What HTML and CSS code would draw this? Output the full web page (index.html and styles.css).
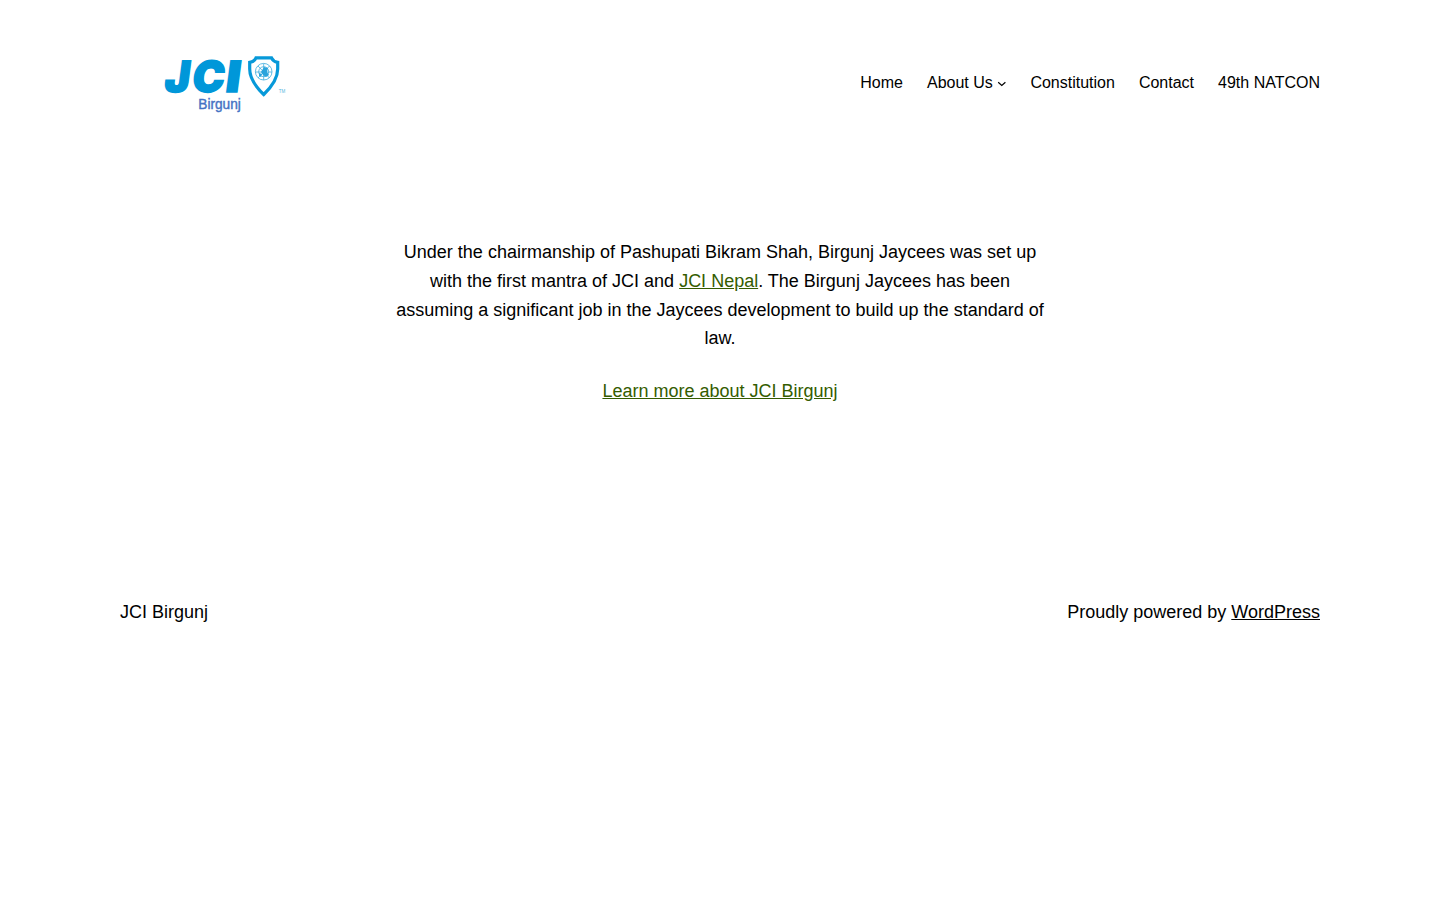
FILE: index.html
```html
<!DOCTYPE html>
<html lang="en">
<head>
<meta charset="utf-8">
<title>JCI Birgunj</title>
<link rel="stylesheet" href="styles.css">
</head>
<body>
<header class="site-header">
  <a class="logo" aria-label="JCI Birgunj">
    <svg width="210" height="80" viewBox="120 43 210 80">
      <g class="logo-letters" transform="translate(0 92.3) skewX(-7.5)">
        <text x="163.600" y="0" textLength="25" lengthAdjust="spacingAndGlyphs">J</text>
        <text x="191" y="0" textLength="32" lengthAdjust="spacingAndGlyphs">C</text>
        <text x="224.500" y="0" textLength="14.500" lengthAdjust="spacingAndGlyphs">I</text>
      </g>
      <path class="shield" d="M256 57.900H271.500Q273 61.500 277.700 62.300V69C277.700 79 271.500 87 263.700 94.500C256 87 249.700 79 249.700 69V62.300Q254.500 61.500 256 57.900Z"/>
      <g class="globe">
        <circle cx="263.700" cy="71.700" r="8.300"/>
        <circle cx="263.700" cy="71.700" r="5"/>
        <path d="M255.400 72H272M263.700 63.700V80M258 66L269.500 78M269.500 66L258 78"/>
        <path class="land" d="M264 67l4 1-1 4 2 3-3 2-3-2-2-3zM259 73l3 1-1 3-2-1z"/>
      </g>
      <text class="tm" x="278.800" y="92.800" textLength="6.500" lengthAdjust="spacingAndGlyphs">TM</text>
      <text class="logo-city" x="198.300" y="109" textLength="42.500" lengthAdjust="spacingAndGlyphs">Birgunj</text>
    </svg>
  </a>
  <nav class="menu">
    <a>Home</a>
    <a class="has-submenu">About Us<svg class="chevron" viewBox="0 0 12 12"><path d="M1.500 4L6 8l4.500-4"/></svg></a>
    <a>Constitution</a>
    <a>Contact</a>
    <a>49th NATCON</a>
  </nav>
</header>
<main class="content">
  <p>Under the chairmanship of Pashupati Bikram Shah, Birgunj Jaycees was set up with the first mantra of JCI and <a class="link">JCI Nepal</a>. The Birgunj Jaycees has been assuming a significant job in the Jaycees development to build up the standard of law.</p>
  <p><a class="link">Learn more about JCI Birgunj</a></p>
</main>
<footer class="site-footer">
  <p>JCI Birgunj</p>
  <p>Proudly powered by <a class="credit">WordPress</a></p>
</footer>
</body>
</html>
```
FILE: styles.css
```css
body {
  margin: 0;
  background: #fff;
  color: #000;
  font: 18px/1.6 "Liberation Sans", Arial, sans-serif;
}
p { margin: 0; }
.site-header, .site-footer {
  width: 1200px;
  margin: 0 auto;
  display: flex;
  justify-content: space-between;
  align-items: center;
}
.site-header { padding-top: 43px; }
.logo, .logo svg { display: block; }
.logo-letters {
  font-family: Inter, "Liberation Sans", sans-serif;
  font-size: 43px;
  font-weight: 900;
  fill: #0097d9;
  stroke: #0097d9;
  stroke-width: 1.5px;
}
.shield { fill: #fff; stroke: #0799d9; stroke-width: 3.2px; }
.globe { fill: none; stroke: #3cabdc; stroke-width: .8px; }
.globe .land { fill: #2ba4dc; stroke: none; }
.tm { font-size: 5px; fill: #55b5e0; }
.logo-city {
  font-size: 14px;
  fill: #4472c4;
  stroke: #4472c4;
  stroke-width: .4px;
}
.menu { display: flex; gap: 24px; font-size: 16px; }
.has-submenu { display: flex; align-items: center; }
.chevron {
  width: 9.6px;
  height: 9.6px;
  margin: 1.2px 0 0 4px;
  fill: none;
  stroke: #000;
  stroke-width: 1.5px;
}
.content {
  width: 650px;
  margin: 115px auto 0;
  text-align: center;
}
.content p + p { margin-top: 24px; }
.link { color: #345c00; text-decoration: underline; }
.site-footer { margin-top: 192px; }
.credit { text-decoration: underline; }
```
